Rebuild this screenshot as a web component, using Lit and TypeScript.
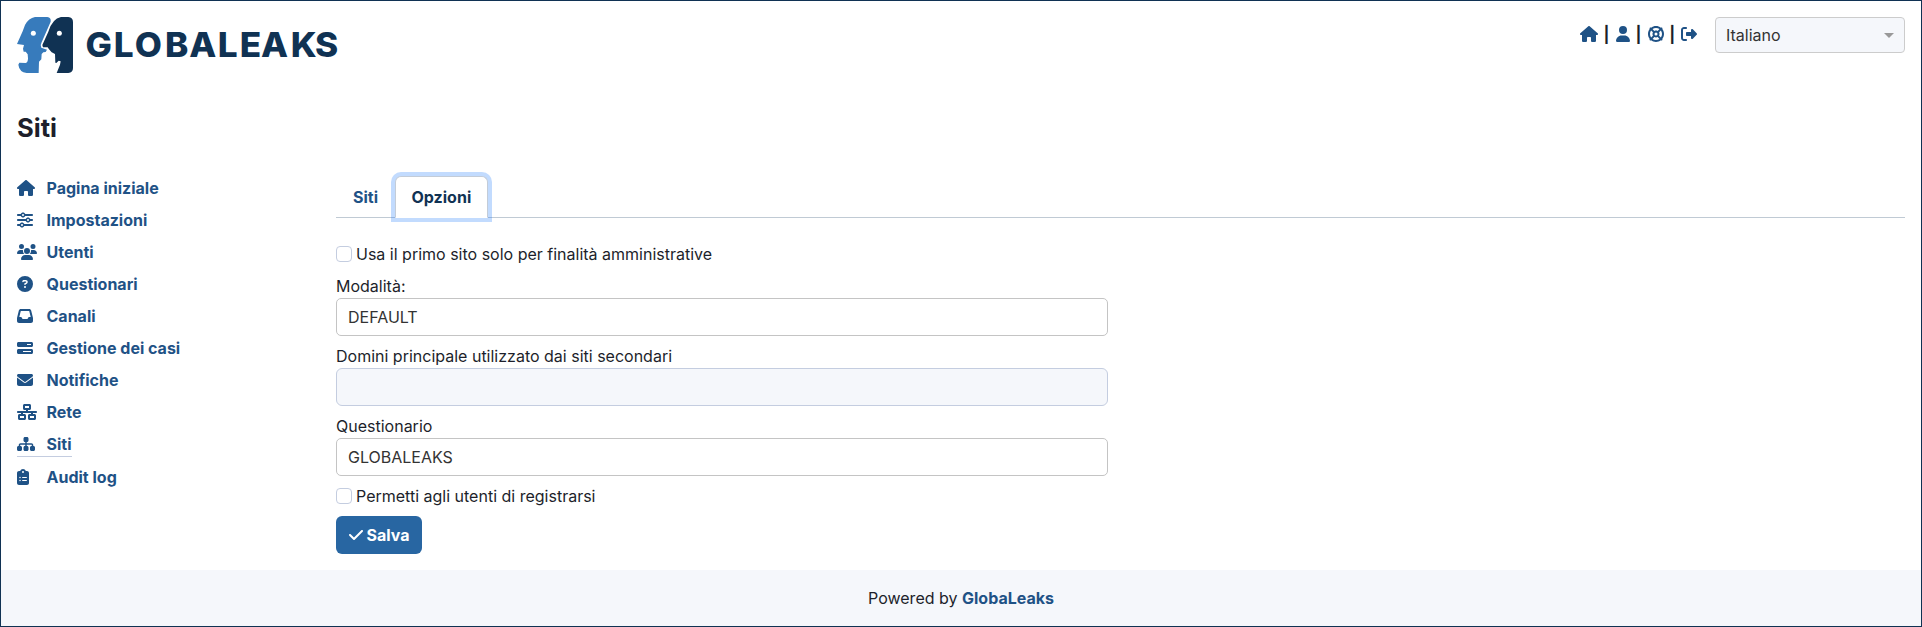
import { LitElement, html, svg, css } from "lit";
import { customElement, property } from "lit/decorators.js";

const ICONS: Record<string, [number, string]> = {
  house: [576, "M575.8 255.5c0 18-15 32.1-32 32.1l-32 0 .7 160.2c0 2.7-.2 5.4-.5 8.1l0 16.2c0 22.1-17.9 40-40 40l-16 0c-1.1 0-2.2 0-3.3-.1c-1.4 .1-2.8 .1-4.2 .1L416 512l-24 0c-22.1 0-40-17.9-40-40l0-24 0-64c0-17.7-14.3-32-32-32l-64 0c-17.7 0-32 14.3-32 32l0 64 0 24c0 22.1-17.9 40-40 40l-24 0-31.9 0c-1.5 0-3-.1-4.5-.2c-1.2 .1-2.4 .2-3.6 .2l-16 0c-22.1 0-40-17.9-40-40l0-112c0-.9 0-1.9 .1-2.8l0-69.7-32 0c-18 0-32-14-32-32.1c0-9 3-17 10-24L266.4 8c7-7 15-8 22-8s15 2 21 7L564.8 231.5c8 7 12 15 11 24z"],
  user: [448, "M224 256A128 128 0 1 0 224 0a128 128 0 1 0 0 256zm-45.7 48C79.8 304 0 383.8 0 482.3C0 498.7 13.3 512 29.7 512l388.6 0c16.4 0 29.7-13.3 29.7-29.7C448 383.8 368.2 304 269.7 304l-91.4 0z"],
  lifeRing: [512, "M367.2 412.5C335.9 434.9 297.5 448 256 448s-79.9-13.1-111.2-35.5l58-58c15.8 8.6 34 13.5 53.3 13.5s37.4-4.9 53.3-13.5l58 58zm90.7 .8c33.8-43.4 54-98 54-157.3s-20.2-113.9-54-157.3c9-12.5 7.9-30.1-3.4-41.3S425.8 45 413.3 54C369.9 20.2 315.3 0 256 0S142.1 20.2 98.7 54c-12.5-9-30.1-7.9-41.3 3.4S45 86.2 54 98.7C20.2 142.1 0 196.7 0 256s20.2 113.9 54 157.3c-9 12.5-7.9 30.1 3.4 41.3S86.2 467 98.7 458c43.4 33.8 98 54 157.3 54s113.9-20.2 157.3-54c12.5 9 30.1 7.9 41.3-3.4s12.4-28.8 3.4-41.3zm-45.5-46.1l-58-58c8.6-15.8 13.5-34 13.5-53.3s-4.9-37.4-13.5-53.3l58-58C434.9 176.1 448 214.5 448 256s-13.1 79.9-35.5 111.2zM367.2 99.5l-58 58c-15.8-8.6-34-13.5-53.3-13.5s-37.4 4.9-53.3 13.5l-58-58C176.1 77.1 214.5 64 256 64s79.9 13.1 111.2 35.5zM157.5 309.3l-58 58C77.1 335.9 64 297.5 64 256s13.1-79.9 35.5-111.2l58 58c-8.6 15.8-13.5 34-13.5 53.3s4.9 37.4 13.5 53.3zM208 256a48 48 0 1 1 96 0 48 48 0 1 1 -96 0z"],
  logout: [512, "M377.9 105.9L500.7 228.7c7.2 7.2 11.3 17.1 11.3 27.3s-4.1 20.1-11.3 27.3L377.9 406.1c-6.4 6.4-15 9.9-24 9.9c-18.7 0-33.9-15.2-33.9-33.9l0-62.1-128 0c-17.7 0-32-14.3-32-32l0-64c0-17.7 14.3-32 32-32l128 0 0-62.1c0-18.7 15.2-33.9 33.9-33.9c9 0 17.6 3.6 24 9.9zM160 96L96 96c-17.7 0-32 14.3-32 32l0 256c0 17.7 14.3 32 32 32l64 0c17.7 0 32 14.3 32 32s-14.3 32-32 32l-64 0c-53 0-96-43-96-96L0 128C0 75 43 32 96 32l64 0c17.7 0 32 14.3 32 32s-14.3 32-32 32z"],
  sliders: [512, "M0 416c0 17.7 14.3 32 32 32l54.7 0c12.3 28.3 40.5 48 73.3 48s61-19.7 73.3-48L480 448c17.7 0 32-14.3 32-32s-14.3-32-32-32l-246.7 0c-12.3-28.3-40.5-48-73.3-48s-61 19.7-73.3 48L32 384c-17.7 0-32 14.3-32 32zm128 0a32 32 0 1 1 64 0 32 32 0 1 1 -64 0zM320 256a32 32 0 1 1 64 0 32 32 0 1 1 -64 0zm32-80c-32.8 0-61 19.7-73.3 48L32 224c-17.7 0-32 14.3-32 32s14.3 32 32 32l246.7 0c12.3 28.3 40.5 48 73.3 48s61-19.7 73.3-48l54.7 0c17.7 0 32-14.3 32-32s-14.3-32-32-32l-54.7 0c-12.3-28.3-40.5-48-73.3-48zM192 128a32 32 0 1 1 0-64 32 32 0 1 1 0 64zm73.3-64C253 35.7 224.8 16 192 16s-61 19.7-73.3 48L32 64C14.3 64 0 78.3 0 96s14.3 32 32 32l86.7 0c12.3 28.3 40.5 48 73.3 48s61-19.7 73.3-48L480 128c17.7 0 32-14.3 32-32s-14.3-32-32-32L265.3 64z"],
  users: [640, "M144 0a80 80 0 1 1 0 160A80 80 0 1 1 144 0zM512 0a80 80 0 1 1 0 160A80 80 0 1 1 512 0zM0 298.7C0 239.8 47.8 192 106.7 192l42.7 0c15.9 0 31 3.5 44.6 9.7c-1.3 7.2-1.9 14.7-1.9 22.3c0 38.2 16.8 72.5 43.3 96c-.2 0-.4 0-.7 0L21.3 320C9.6 320 0 310.4 0 298.7zM405.3 320c-.2 0-.4 0-.7 0c26.6-23.5 43.3-57.8 43.3-96c0-7.6-.7-15-1.9-22.3c13.6-6.3 28.7-9.7 44.6-9.7l42.7 0C592.2 192 640 239.8 640 298.7c0 11.8-9.6 21.3-21.3 21.3l-213.3 0zM224 224a96 96 0 1 1 192 0 96 96 0 1 1 -192 0zM128 485.3C128 411.7 187.7 352 261.3 352l117.3 0C452.3 352 512 411.7 512 485.3c0 14.7-11.9 26.7-26.7 26.7l-330.7 0c-14.7 0-26.7-11.9-26.7-26.7z"],
  question: [512, "M256 512A256 256 0 1 0 256 0a256 256 0 1 0 0 512zM169.8 165.3c7.9-22.3 29.1-37.3 52.8-37.3l58.3 0c34.9 0 63.1 28.3 63.1 63.1c0 22.6-12.1 43.5-31.7 54.8L280 264.4c-.2 13-10.9 23.6-24 23.6c-13.3 0-24-10.7-24-24l0-13.5c0-8.6 4.6-16.5 12.1-20.8l44.3-25.4c4.7-2.7 7.6-7.7 7.6-13.1c0-8.4-6.8-15.1-15.1-15.1l-58.3 0c-3.4 0-6.4 2.1-7.5 5.3l-.4 1.2c-4.4 12.5-18.2 19-30.6 14.6s-19-18.2-14.6-30.6l.4-1.2zM224 352a32 32 0 1 1 64 0 32 32 0 1 1 -64 0z"],
  inbox: [512, "M121 32C91.6 32 66 52 58.9 80.5L1.9 308.4C.6 313.5 0 318.7 0 323.9L0 416c0 35.3 28.7 64 64 64l384 0c35.3 0 64-28.7 64-64l0-92.1c0-5.2-.6-10.4-1.9-15.5l-57-227.9C446 52 420.4 32 391 32L121 32zm0 64l270 0 48 192-51.2 0c-12.1 0-23.2 6.8-28.6 17.7l-14.3 28.6c-5.4 10.8-16.5 17.7-28.6 17.7l-120.4 0c-12.1 0-23.2-6.8-28.6-17.7l-14.3-28.6c-5.4-10.8-16.5-17.7-28.6-17.7L73 288 121 96z"],
  progress: [512, "M448 160l-128 0 0-32 128 0 0 32zM48 64C21.5 64 0 85.5 0 112l0 64c0 26.5 21.5 48 48 48l416 0c26.5 0 48-21.5 48-48l0-64c0-26.5-21.5-48-48-48L48 64zM448 352l0 32-256 0 0-32 256 0zM48 288c-26.5 0-48 21.5-48 48l0 64c0 26.5 21.5 48 48 48l416 0c26.5 0 48-21.5 48-48l0-64c0-26.5-21.5-48-48-48L48 288z"],
  envelope: [512, "M48 64C21.5 64 0 85.5 0 112c0 15.1 7.1 29.3 19.2 38.4L236.8 313.6c11.4 8.5 27 8.5 38.4 0L492.8 150.4c12.1-9.1 19.2-23.3 19.2-38.4c0-26.5-21.5-48-48-48L48 64zM0 176L0 384c0 35.3 28.7 64 64 64l384 0c35.3 0 64-28.7 64-64l0-208L294.4 339.2c-22.8 17.1-54 17.1-76.8 0L0 176z"],
  network: [640, "M256 64l128 0 0 64-128 0 0-64zM240 0c-26.5 0-48 21.5-48 48l0 96c0 26.5 21.5 48 48 48l48 0 0 32L32 224c-17.7 0-32 14.3-32 32s14.3 32 32 32l96 0 0 32-48 0c-26.5 0-48 21.5-48 48l0 96c0 26.5 21.5 48 48 48l160 0c26.5 0 48-21.5 48-48l0-96c0-26.5-21.5-48-48-48l-48 0 0-32 256 0 0 32-48 0c-26.5 0-48 21.5-48 48l0 96c0 26.5 21.5 48 48 48l160 0c26.5 0 48-21.5 48-48l0-96c0-26.5-21.5-48-48-48l-48 0 0-32 96 0c17.7 0 32-14.3 32-32s-14.3-32-32-32l-256 0 0-32 48 0c26.5 0 48-21.5 48-48l0-96c0-26.5-21.5-48-48-48L240 0zM96 448l0-64 128 0 0 64L96 448zm320-64l128 0 0 64-128 0 0-64z"],
  sitemap: [576, "M208 80c0-26.5 21.5-48 48-48l64 0c26.5 0 48 21.5 48 48l0 64c0 26.5-21.5 48-48 48l-8 0 0 40 152 0c30.9 0 56 25.1 56 56l0 32 8 0c26.5 0 48 21.5 48 48l0 64c0 26.5-21.5 48-48 48l-64 0c-26.5 0-48-21.5-48-48l0-64c0-26.5 21.5-48 48-48l8 0 0-32c0-4.4-3.6-8-8-8l-152 0 0 40 8 0c26.5 0 48 21.5 48 48l0 64c0 26.5-21.5 48-48 48l-64 0c-26.5 0-48-21.5-48-48l0-64c0-26.5 21.5-48 48-48l8 0 0-40-152 0c-4.4 0-8 3.6-8 8l0 32 8 0c26.5 0 48 21.5 48 48l0 64c0 26.5-21.5 48-48 48l-64 0c-26.5 0-48-21.5-48-48l0-64c0-26.5 21.5-48 48-48l8 0 0-32c0-30.9 25.1-56 56-56l152 0 0-40-8 0c-26.5 0-48-21.5-48-48l0-64z"],
  clipboard: [384, "M192 0c-41.8 0-77.4 26.7-90.5 64L64 64C28.7 64 0 92.7 0 128L0 448c0 35.3 28.7 64 64 64l256 0c35.3 0 64-28.7 64-64l0-320c0-35.3-28.7-64-64-64l-37.5 0C269.4 26.7 233.8 0 192 0zm0 64a32 32 0 1 1 0 64 32 32 0 1 1 0-64zM72 272a24 24 0 1 1 48 0 24 24 0 1 1 -48 0zm104-16l128 0c8.8 0 16 7.2 16 16s-7.2 16-16 16l-128 0c-8.8 0-16-7.2-16-16s7.2-16 16-16zM72 368a24 24 0 1 1 48 0 24 24 0 1 1 -48 0zm88 0c0-8.8 7.2-16 16-16l128 0c8.8 0 16 7.2 16 16s-7.2 16-16 16l-128 0c-8.8 0-16-7.2-16-16z"],
  check: [448, "M438.6 105.4c12.5 12.5 12.5 32.8 0 45.3l-256 256c-12.5 12.5-32.8 12.5-45.3 0l-128-128c-12.5-12.5-12.5-32.8 0-45.3s32.8-12.5 45.3 0L160 338.7 393.4 105.4c12.5-12.5 32.8-12.5 45.3 0z"],
};

const icon = (name: string) => {
  const [w, d] = ICONS[name];
  return html`<svg class="icon" height="16" width=${w / 32} viewBox="0 0 ${w} 512">${svg`<path d=${d}></path>`}</svg>`;
};

const iconStyles = css`
  .icon { display: block; fill: currentColor; flex: none; }
`;

@customElement("gl-logo")
class GlLogo extends LitElement {
  static styles = css`
    :host { display: block; }
    svg { display: block; }
    .word { font: 800 34px Inter, "Liberation Sans", sans-serif; fill: #103253; text-anchor: middle; }
  `;
  render() {
    return html`<svg width="322" height="56" viewBox="0 0 966 168">
      <path fill="#377bbc" d="M54 0H91Q103 2 101 14L74 76Q69 84 73 92L90 98L86 105L79 106L74 111L73 127L66 134L65 168H29Q7 165 4 143L7 137L26 138Q33 136 33 124L32 112L26 104H20L18 95L21 84L0 81L17 43L24 24Q35 3 54 0Z"></path>
      <path fill="#103253" d="M132 0H154Q168 2 168 15V153Q168 167 154 168H119L129 143L131 133L125 131L118 138L115 137L114 111L104 106L96 97L92 91H78L76 84L94 44Q106 5 132 0Z"></path>
      <circle cx="49" cy="49" r="7.500" fill="#fff"></circle>
      <circle cx="127" cy="49" r="7.500" fill="#fff"></circle>
      <text class="word" transform="translate(0 119) scale(3.1 3)" x="79.2 103.200 127.200 154.500 179.700 204 226 249.300 277.500 299.600">GLOBALEAKS</text>
    </svg>`;
  }
}

@customElement("gl-header")
class GlHeader extends LitElement {
  static styles = [iconStyles, css`
    :host { display: flex; justify-content: space-between; align-items: flex-start; height: 56px; }
    .tools { display: flex; align-items: center; }
    .links { display: flex; align-items: center; color: #1f5286; margin-right: 18px; padding-bottom: 2px; }
    .bar { width: 18px; text-align: center; color: #1d1f2b; font-weight: 700; line-height: 20px; }
    .bar.tight { width: 17.500px; }
    .select { box-sizing: border-box; width: 190px; height: 36px; border: 1px solid #ccc; border-radius: 4px;
      background: #f5f7fb; color: #333; display: flex; align-items: center; justify-content: space-between; padding: 0 10px; }
    .caret { border: 5px solid transparent; border-top-color: #999; border-bottom: 0; }
  `];
  render() {
    return html`<gl-logo></gl-logo>
      <div class="tools">
        <div class="links">
          ${icon("house")}<span class="bar">|</span>${icon("user")}<span class="bar">|</span>${icon("lifeRing")}<span class="bar tight">|</span>${icon("logout")}
        </div>
        <div class="select"><span>Italiano</span><span class="caret"></span></div>
      </div>`;
  }
}

const MENU = [
  ["house", "Pagina iniziale"],
  ["sliders", "Impostazioni"],
  ["users", "Utenti"],
  ["question", "Questionari"],
  ["inbox", "Canali"],
  ["progress", "Gestione dei casi"],
  ["envelope", "Notifiche"],
  ["network", "Rete"],
  ["sitemap", "Siti"],
  ["clipboard", "Audit log"],
];

@customElement("gl-menu")
class GlMenu extends LitElement {
  @property() active = "Siti";
  static styles = [iconStyles, css`
    :host { display: flex; flex-direction: column; align-items: flex-start; gap: 8px; }
    .item { display: flex; align-items: center; height: 24px; color: #1f5286; font-weight: 700; }
    .item.active { border-bottom: 1px solid #c4cde0; }
    .slot { width: 29.500px; }
  `];
  render() {
    return MENU.map(([i, label]) => html`<div class="item ${label === this.active ? "active" : ""}"><span class="slot">${icon(i)}</span><span>${label}</span></div>`);
  }
}

@customElement("gl-options")
class GlOptions extends LitElement {
  static styles = [iconStyles, css`
    :host { display: block; }
    .tabs { display: flex; border-bottom: 1px solid #c0cad4; height: 41px; font-weight: 700; color: #1f5286; }
    .tab { box-sizing: border-box; height: 42px; padding: 8px 15.500px 8px 16px; border: 1px solid transparent; }
    .tab.active { color: #103253; background: #fff; border-color: #c3ccd8 #c3ccd8 #fff; border-radius: 6px 6px 0 0;
      box-shadow: 0 0 0 4px rgba(13, 110, 253, .25); }
    .form { width: 772px; padding-top: 24px; }
    .check { display: flex; align-items: center; gap: 4px; height: 24px; }
    .box { box-sizing: border-box; width: 16px; height: 16px; border: 1px solid #c4cde0; border-radius: 4px; }
    .field { margin-top: 8px; }
    .label { height: 24px; }
    .input { box-sizing: border-box; height: 38px; border: 1px solid #c4c4c4; border-radius: 5px; padding: 6px 11px; color: #333; }
    .input.disabled { background: #f5f7fb; border-color: #c4cde0; border-radius: 6px; }
    .last { margin-top: 8px; }
    .save { display: flex; align-items: center; gap: 4px; box-sizing: border-box; width: 86px; height: 38px; margin-top: 8px; padding-left: 12.500px;
      border-radius: 6px; background: #2866a2; color: #fff; font-weight: 700; }
  `];
  render() {
    return html`<div class="tabs"><div class="tab">Siti</div><div class="tab active">Opzioni</div></div>
      <div class="form">
        <div class="check"><span class="box"></span><span>Usa il primo sito solo per finalità amministrative</span></div>
        <div class="field"><div class="label">Modalità:</div><div class="input">DEFAULT</div></div>
        <div class="field"><div class="label">Domini principale utilizzato dai siti secondari</div><div class="input disabled"></div></div>
        <div class="field"><div class="label">Questionario</div><div class="input">GLOBALEAKS</div></div>
        <div class="check last"><span class="box"></span><span>Permetti agli utenti di registrarsi</span></div>
        <div class="save">${icon("check")}<span>Salva</span></div>
      </div>`;
  }
}

@customElement("app-root")
class AppRoot extends LitElement {
  static styles = css`
    :host { display: flex; flex-direction: column; box-sizing: border-box; height: 627px; border: 1px solid #103253;
      background: #fff; color: #1d1f2b; font: 16px/24px Inter, "Liberation Sans", sans-serif; }
    .page { flex: 1; padding: 16px 16px 0; }
    .title { margin: 40px 0 0; font-size: 25.600px; line-height: 30px; font-weight: 700; }
    .columns { display: grid; grid-template-columns: 319px 1fr; margin-top: 33px; }
    .footer { height: 56px; display: flex; align-items: center; justify-content: center; background: #f5f7fb; }
    .brand { color: #1f5286; font-weight: 700; margin-left: 4.500px; }
  `;
  render() {
    return html`<div class="page">
        <gl-header></gl-header>
        <h1 class="title">Siti</h1>
        <div class="columns"><gl-menu></gl-menu><gl-options></gl-options></div>
      </div>
      <div class="footer"><span>Powered by</span><span class="brand">GlobaLeaks</span></div>`;
  }
}
